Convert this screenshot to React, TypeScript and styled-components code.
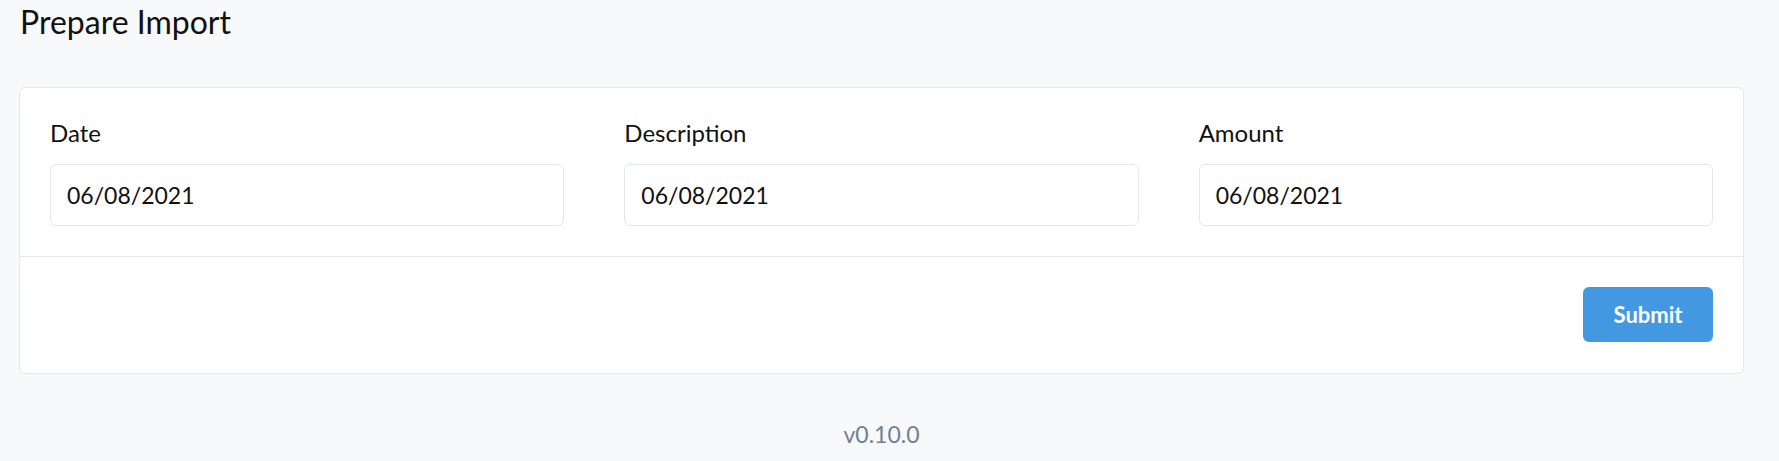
import React from 'react';
import styled, { createGlobalStyle } from 'styled-components';

const GlobalStyle = createGlobalStyle`
  body {
    margin: 0;
    background: #f7f9fb;
    font-family: Lato, "Noto Sans", sans-serif;
    color: #1a202c;
  }
`;

const fields = [
  { label: 'Date', value: '06/08/2021' },
  { label: 'Description', value: '06/08/2021' },
  { label: 'Amount', value: '06/08/2021' },
];

const App = () => {
  return (
    <>
      <GlobalStyle />
      <Page>
        <Title>Prepare Import</Title>
        <Card>
          <CardBody>
            {fields.map((f) => (
              <Field key={f.label}>
                <Label>{f.label}</Label>
                <Input defaultValue={f.value} spellCheck="false" />
              </Field>
            ))}
          </CardBody>
          <CardFooter>
            <Button type="button">Submit</Button>
          </CardFooter>
        </Card>
        <Version>v0.10.0</Version>
      </Page>
    </>
  );
};

export default App;

const Page = styled.div`
  padding: 0 35px 0 19px;
`;

const Title = styled.h1`
  margin: 0;
  padding-left: 1px;
  font-size: 32px;
  font-weight: 400;
  line-height: 44px;
  color: #111;
`;

const Card = styled.div`
  margin-top: 43px;
  background: #fff;
  border: 1px solid #e2e8f0;
  border-radius: 6px;
`;

const CardBody = styled.div`
  display: grid;
  grid-template-columns: repeat(3, 1fr);
  column-gap: 60px;
  padding: 29px 30px 30px 30px;
`;

const Field = styled.div`
  display: flex;
  flex-direction: column;
`;

const Label = styled.label`
  font-size: 24px;
  line-height: 32px;
  margin-bottom: 15px;
  color: #111;
`;

const Input = styled.input`
  box-sizing: border-box;
  height: 62px;
  width: 100%;
  padding: 0 16px;
  border: 1px solid #e2e8f0;
  border-radius: 6px;
  font-family: inherit;
  font-size: 23px;
  color: #111;
  outline: none;
`;

const CardFooter = styled.div`
  display: flex;
  justify-content: flex-end;
  padding: 30px 30px 31px;
  border-top: 1px solid #e2e8f0;
`;

const Button = styled.button`
  width: 130px;
  height: 55px;
  border: none;
  border-radius: 6px;
  background: #4299e1;
  color: #fff;
  font-family: inherit;
  font-size: 22px;
  font-weight: 700;
  cursor: pointer;
`;

const Version = styled.div`
  margin-top: 45px;
  text-align: center;
  font-size: 23px;
  line-height: 30px;
  color: #718096;
`;
